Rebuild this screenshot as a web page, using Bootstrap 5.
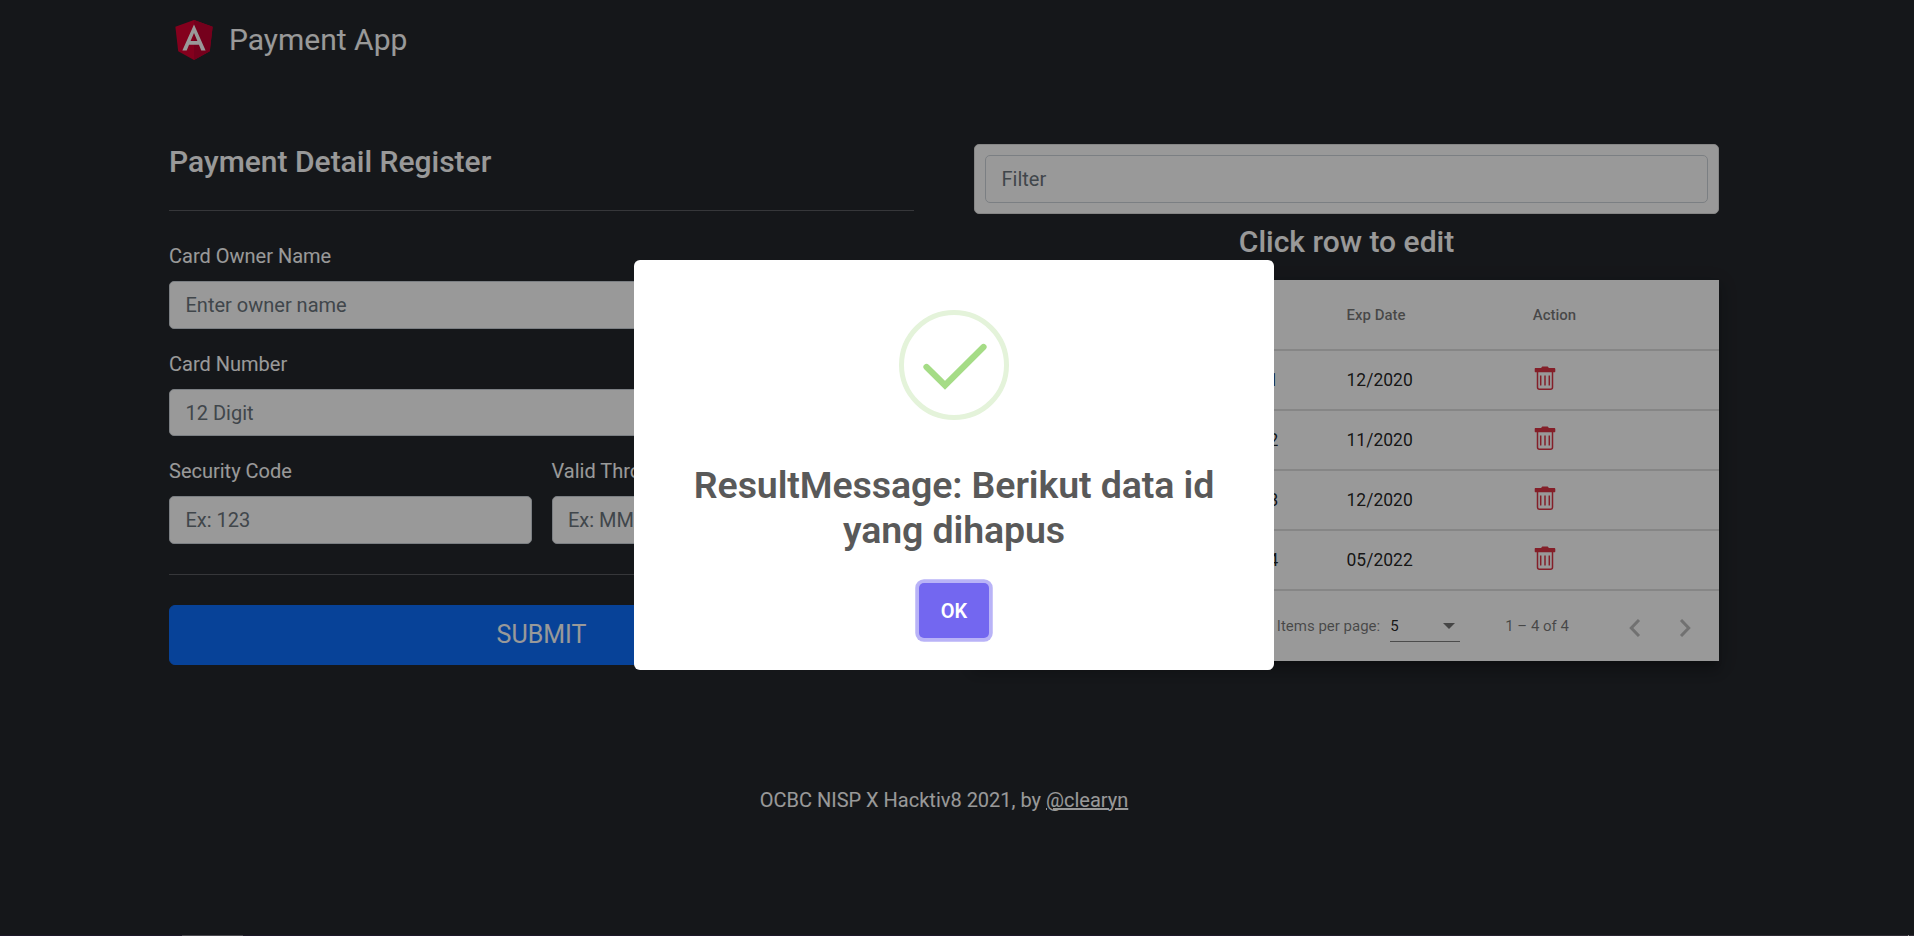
<!DOCTYPE html>
<html lang="en">
<head>
<meta charset="utf-8">
<meta name="viewport" content="width=device-width, initial-scale=1">
<title>Payment App</title>
<link href="https://cdn.jsdelivr.net/npm/bootstrap@5.3.0/dist/css/bootstrap.min.css" rel="stylesheet">
<style>
  html { font-size: 20px; }
  body { background: #24272c; color: #fff; font-family: Roboto, sans-serif; height: 936px; overflow: hidden; }
  .page-wrap { width: 1550px; margin-left: 169px; }
  .brand-bar { height: 144px; padding-top: 14px; }
  .brand-name { font-size: 30px; line-height: 50px; margin: 1px 0 0 10px; }
  .main-cols { gap: 60px; }
  .main-cols > section { width: 745px; }
  h3 { font-size: 30px; font-weight: 500; line-height: 36px; }
  hr { margin: 0; opacity: .25; color: #fff; border-top-width: 1px; }
  .rule-top { margin-top: 30px; }
  .rule-bottom { margin: 30px 0; }
  .pay-form { padding-top: 30.3px; }
  .next-field { margin-top: 20px; }
  .field-pair { gap: 20px; }
  .form-label { line-height: 30px; margin-bottom: 10px; display: block; }
  .form-control, .form-control:focus { height: 47.5px; border: 1px solid #ced4da; border-radius: 5px; padding: 7px 15.5px; background: #fff; }
  .form-control::placeholder { color: #6c757d; }
  .btn-submit { height: 60px; font-size: 25px; line-height: 1.5; border-radius: 6px; background: #0d6efd; padding: 0; }
  .filter-box { border: 1px solid #dfdfdf; border-radius: 5px; background: #fff; padding: 10px; height: 70px; }
  .edit-title { margin: 10px 0 20px; height: 36px; }
  .sheet { background: #fff; color: rgba(0,0,0,.87); box-shadow: 0 6px 6px -3px rgba(0,0,0,.2), 0 10px 12px 1px rgba(0,0,0,.14), 0 4px 17px 2px rgba(0,0,0,.12); }
  .pay-table { width: 100%; table-layout: fixed; border-collapse: separate; border-spacing: 0; font-size: 17.5px; }
  .pay-table th, .pay-table td { padding: 0; border-bottom: 2px solid #dfdfdf; vertical-align: middle; }
  .pay-table th { height: 71px; padding-top: 1px; font-size: 15px; font-weight: 500; color: rgba(0,0,0,.54); }
  .pay-table td { height: 60px; }
  .pay-table svg { display: block; margin: -3px 0 0 1px; }
  .pager { height: 70px; padding-top: 1px; font-size: 15px; color: rgba(0,0,0,.54); }
  .pager-size { width: 70px; height: 30px; margin-left: 10px; padding-right: 5px; border-bottom: 1px solid rgba(0,0,0,.5); color: rgba(0,0,0,.87); }
  .pager-range { margin-left: 45px; }
  .pager-prev { margin: 2px 0 0 60px; }
  .pager-next { margin: 2px 28px 0 38px; }
  .foot-note { margin-top: 120px; line-height: 30px; }
  .shade { position: fixed; inset: 0; background: rgba(0,0,0,.4); }
  .edge-bar { position: fixed; left: 0; right: 0; bottom: 0; height: 1px; background: linear-gradient(90deg, #1d1829 60%, #302c35); }
  .edge-tab { width: 61px; height: 1px; margin-left: 182px; background: #49474f; }
  .edge-tick { width: 1px; height: 1px; margin-right: 5px; background: #999; }
  .popup { position: fixed; left: 634px; top: 260px; width: 640px; height: 410px; border-radius: 6px; background: #fff; color: #595959; padding-top: 50px; }
  .popup h2 { font-size: 37.5px; line-height: 45px; font-weight: 600; letter-spacing: -.1px; margin: 43px 32px 0; }
  .btn-ok, .btn-ok:hover { width: 70px; height: 55px; margin-top: 30px; padding: 0; border: 0; border-radius: 5px; background: #7367f0; color: #fff; font-size: 20px; font-weight: 600; box-shadow: 0 0 0 3.75px #b9b3f7; }
</style>
<script src="https://cdn.jsdelivr.net/npm/bootstrap@5.3.0/dist/js/bootstrap.bundle.min.js"></script>
</head>
<body>
<svg class="d-none">
  <symbol id="trash" viewBox="0 0 22 25">
    <path fill="#dc3545" d="M1.500 2H7.300C7.500 1 8 .5 9 .5h4c1 0 1.500.5 1.700 1.500H20c1 0 1.300.5 1.300 1.200V5.200c0 .7-.3 1-1 1H1.700C1 6.200.7 5.900.7 5.200V3.200C.7 2.500 1 2 1.500 2z"/>
    <path fill="none" stroke="#dc3545" stroke-width="1.500" d="M3.500 5.500V21.300q0 2 2 2H16.500q2 0 2-2V5.500M6.700 9.500V19.500M11 9.500V19.500M15.300 9.500V19.500"/>
  </symbol>
</svg>

<div class="page-wrap">
  <header class="brand-bar d-flex align-items-start">
    <svg width="50" height="50" viewBox="0 0 250 250"><path fill="#dd0031" d="M125 30 31.900 63.200l14.200 123.100L125 230l78.900-43.700 14.200-123.100z"/><path fill="#c3002f" d="M125 30v200l78.900-43.700 14.200-123.100z"/><path fill="#fff" d="M125 52.100 66.800 182.600h21.700l11.700-29.200h49.400l11.700 29.200H183L125 52.100zm17 83.300h-34l17-40.900z"/></svg>
    <span class="brand-name">Payment App</span>
  </header>

  <div class="main-cols d-flex align-items-start">
    <section>
      <h3 class="mb-0">Payment Detail Register</h3>
      <hr class="rule-top">
      <form class="pay-form">
        <label class="form-label">Card Owner Name</label>
        <input class="form-control" placeholder="Enter owner name">
        <label class="form-label next-field">Card Number</label>
        <input class="form-control" placeholder="12 Digit">
        <div class="field-pair next-field d-flex">
          <div class="flex-fill"><label class="form-label">Security Code</label><input class="form-control" placeholder="Ex: 123"></div>
          <div class="flex-fill"><label class="form-label">Valid Through</label><input class="form-control" placeholder="Ex: MM/YY"></div>
        </div>
        <hr class="rule-bottom">
        <button type="button" class="btn btn-primary btn-submit w-100">SUBMIT</button>
      </form>
    </section>

    <section>
      <div class="filter-box"><input class="form-control" placeholder="Filter"></div>
      <h3 class="edit-title text-center">Click row to edit</h3>
      <div class="sheet">
        <table class="pay-table">
          <thead><tr><th></th><th>Card Number</th><th>Exp Date</th><th>Action</th></tr></thead>
          <tbody>
            <tr><td></td><td>111111111111</td><td>12/2020</td><td><svg width="22" height="25"><use href="#trash"/></svg></td></tr>
            <tr><td></td><td>222222222222</td><td>11/2020</td><td><svg width="22" height="25"><use href="#trash"/></svg></td></tr>
            <tr><td></td><td>333333333333</td><td>12/2020</td><td><svg width="22" height="25"><use href="#trash"/></svg></td></tr>
            <tr><td></td><td>444444444444</td><td>05/2022</td><td><svg width="22" height="25"><use href="#trash"/></svg></td></tr>
          </tbody>
        </table>
        <div class="pager d-flex align-items-center justify-content-end">
          <span>Items per page:</span>
          <div class="pager-size d-flex align-items-center justify-content-between"><span>5</span>
            <svg width="12" height="6"><path fill="#757575" d="M0 0h12L6 6z"/></svg></div>
          <span class="pager-range">1 – 4 of 4</span>
          <svg class="pager-prev" width="12" height="18"><path d="M10 1 2.300 9l7.700 8" fill="none" stroke="#bdbdbd" stroke-width="3"/></svg>
          <svg class="pager-next" width="12" height="18"><path d="M2 1l7.700 8L2 17" fill="none" stroke="#bdbdbd" stroke-width="3"/></svg>
        </div>
      </div>
    </section>
  </div>

  <footer class="foot-note text-center">OCBC NISP X Hacktiv8 2021, by <a class="text-white" href="#">@clearyn</a></footer>
</div>

<div class="shade"></div>
<div class="edge-bar d-flex justify-content-between"><div class="edge-tab"></div><div class="edge-tick"></div></div>

<div class="popup text-center" role="dialog">
  <svg class="d-block mx-auto" width="110" height="110" viewBox="0 0 110 110">
    <circle cx="55" cy="55" r="52.500" fill="none" stroke="#e4f3da" stroke-width="5"/>
    <path d="M27.500 57 46 75.300 84.500 37" fill="none" stroke="#a5dc86" stroke-width="6.200" stroke-linecap="round"/>
  </svg>
  <h2>ResultMessage: Berikut data id yang dihapus</h2>
  <button type="button" class="btn btn-ok">OK</button>
</div>
</body>
</html>
